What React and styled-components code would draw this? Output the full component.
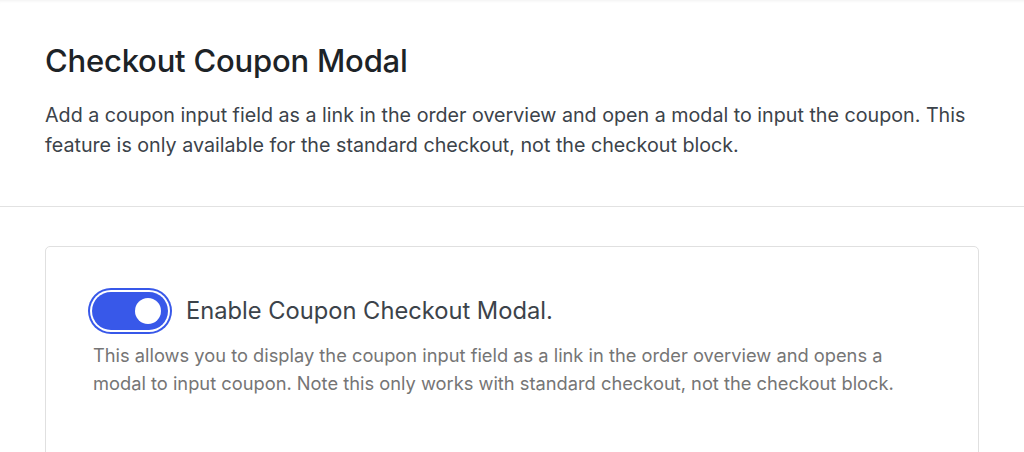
import React, { useState } from "react"
import styled, { createGlobalStyle } from "styled-components"

const GlobalStyle = createGlobalStyle`
  html, body {
    margin: 0;
    padding: 0;
    background: #ffffff;
    font-family: Inter, "Noto Sans", sans-serif;
    -webkit-font-smoothing: antialiased;
  }
`

export default function App() {
  const [enabled, setEnabled] = useState(true)

  return (
    <>
      <GlobalStyle />
      <Page>
        <Header>
          <Title>Checkout Coupon Modal</Title>
          <Intro>
            Add a coupon input field as a link in the order overview and open a modal to input the coupon. This
            feature is only available for the standard checkout, not the checkout block.
          </Intro>
        </Header>
        <Body>
          <Card>
            <ToggleRow>
              <Switch
                role="switch"
                aria-checked={enabled}
                $on={enabled}
                onClick={() => setEnabled(!enabled)}
              >
                <Knob $on={enabled} />
              </Switch>
              <Label>Enable Coupon Checkout Modal.</Label>
            </ToggleRow>
            <Help>
              This allows you to display the coupon input field as a link in the order overview and opens a
              modal to input coupon. Note this only works with standard checkout, not the checkout block.
            </Help>
          </Card>
        </Body>
      </Page>
    </>
  )
}

const Page = styled.div`
  width: 100%;
  height: 452px;
  overflow: hidden;
  background: #ffffff;
`

const Header = styled.header`
  padding: 42px 45px 0 45px;
  height: 207px;
  box-sizing: border-box;
  border-bottom: 1px solid #e2e2e2;
  box-shadow: inset 0 3px 3px -2px rgba(0, 0, 0, 0.06);
`

const Title = styled.h1`
  margin: 0;
  font-size: 31px;
  line-height: 38px;
  font-weight: 500;
  color: #1d2327;
  letter-spacing: -0.2px;
`

const Intro = styled.p`
  margin: 20px 0 0 0;
  font-size: 19.7px;
  line-height: 30px;
  color: #3c434a;
`

const Body = styled.section`
  padding: 39px 45px 0 45px;
`

const Card = styled.div`
  height: 260px;
  box-sizing: border-box;
  border: 1px solid #e0e0e0;
  border-radius: 5px;
  padding: 45px 40px 0 46px;
`

const ToggleRow = styled.div`
  display: flex;
  align-items: center;
  gap: 18px;
`

const Switch = styled.button`
  position: relative;
  flex: none;
  width: 76px;
  height: 38px;
  border: none;
  padding: 0;
  border-radius: 19px;
  background: ${(p) => (p.$on ? "#3858e9" : "#bbbbbb")};
  box-shadow: 0 0 0 2px #ffffff, 0 0 0 4px #3858e9;
  cursor: pointer;
`

const Knob = styled.span`
  position: absolute;
  top: 6px;
  left: ${(p) => (p.$on ? "43px" : "6px")};
  width: 26px;
  height: 26px;
  border-radius: 50%;
  background: #ffffff;
`

const Label = styled.span`
  font-size: 23.7px;
  line-height: 30px;
  color: #3c434a;
`

const Help = styled.p`
  margin: 11px 0 0 1px;
  max-width: 810px;
  font-size: 18.3px;
  line-height: 28px;
  color: #757575;
`
